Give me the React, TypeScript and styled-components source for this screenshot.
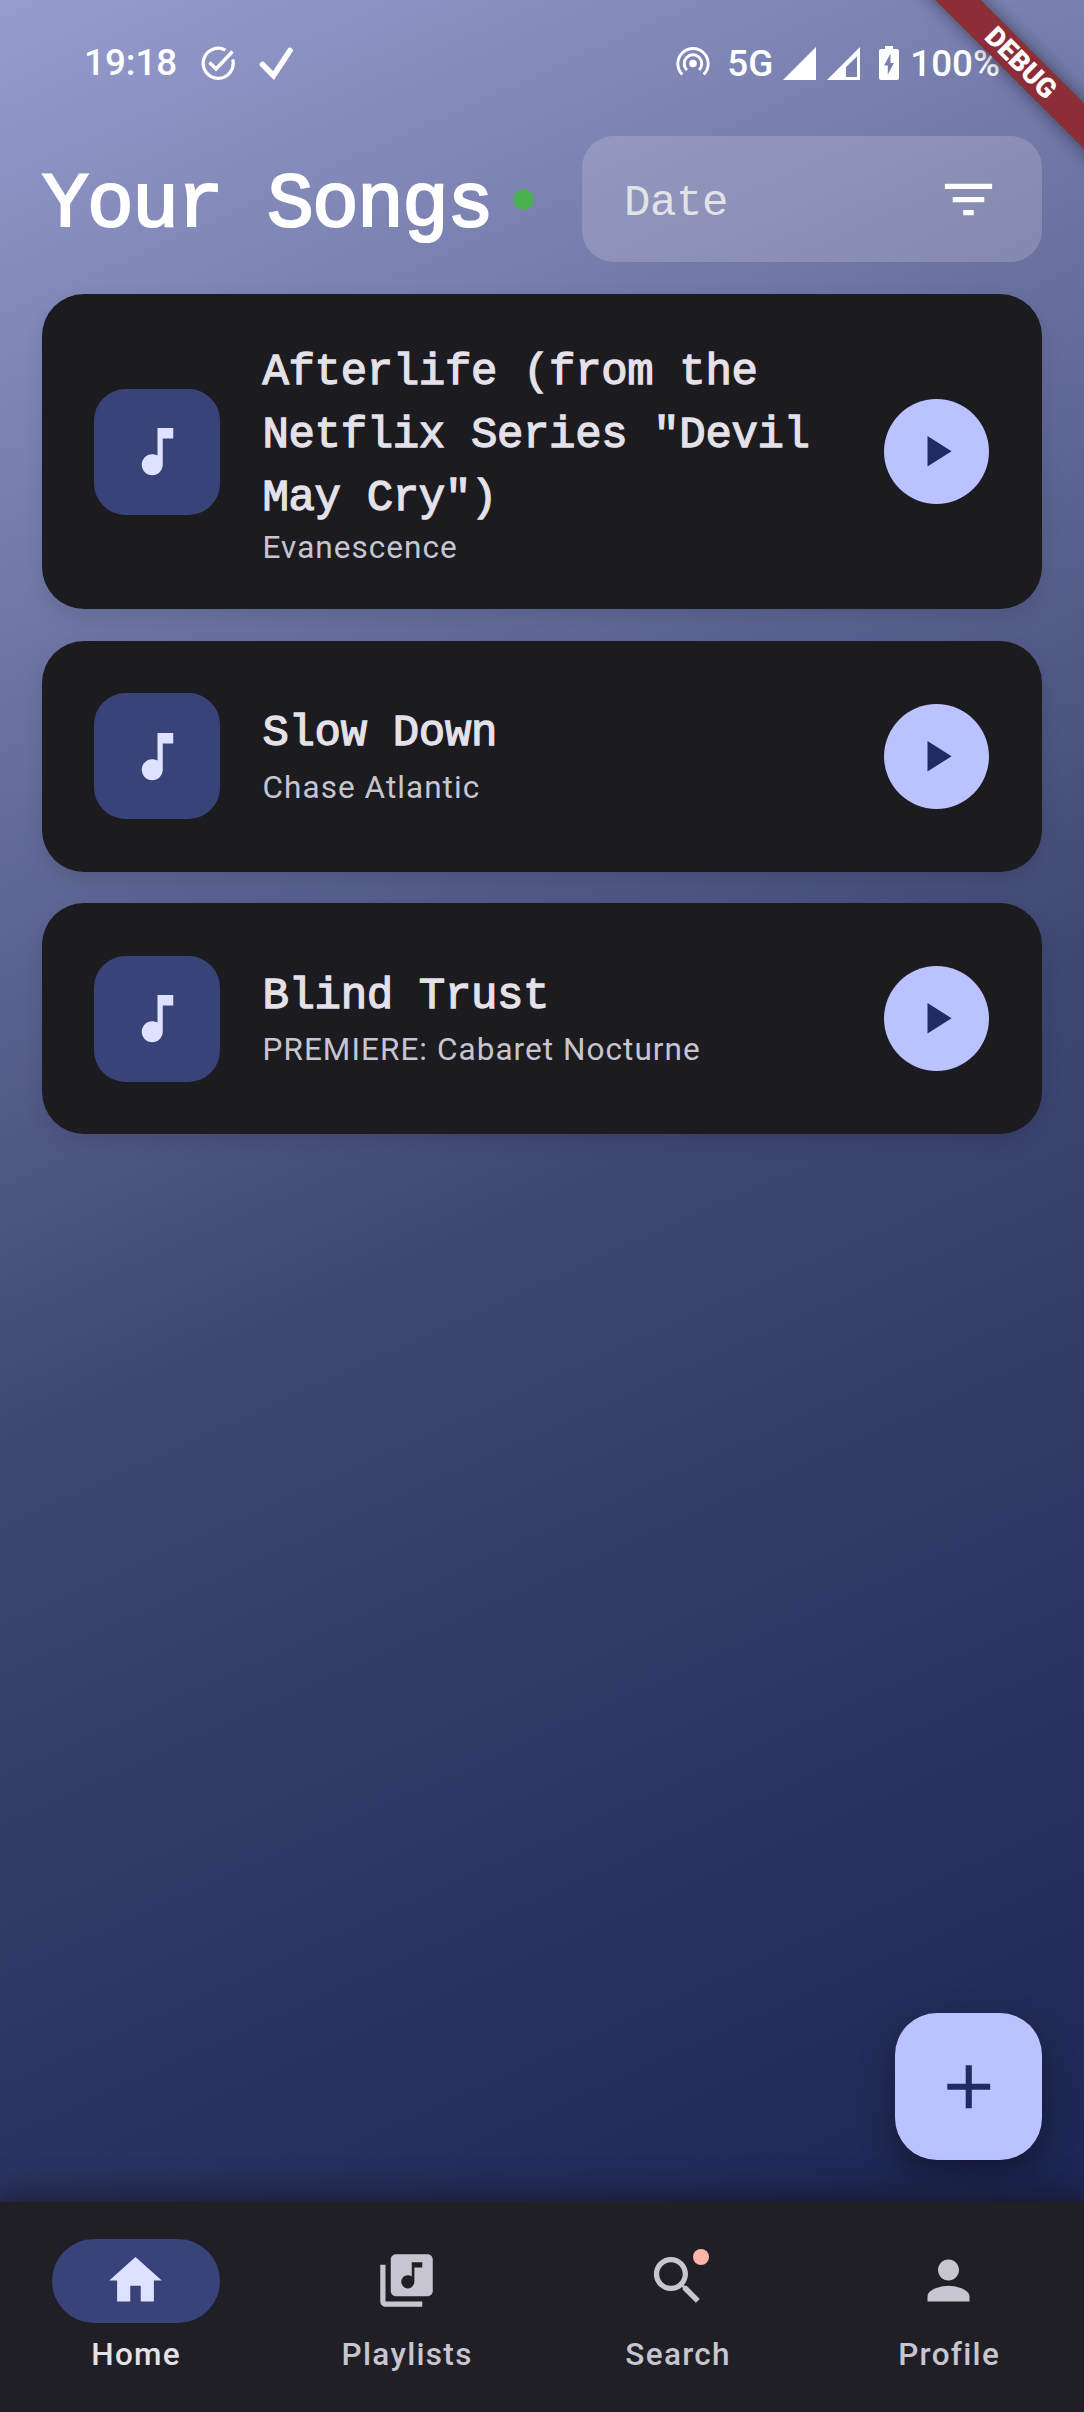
import React from "react";
import styled, { createGlobalStyle, css } from "styled-components";

const MONO = `"Liberation Mono", "DejaVu Sans Mono", monospace`;
const SANS = `Roboto, "Noto Sans", sans-serif`;

const Global = createGlobalStyle`
  *, *::before, *::after { box-sizing: border-box; }
  body { margin: 0; background: #1a224f; }
`;

const Screen = styled.div`
  position: relative;
  display: flex;
  flex-direction: column;
  width: 1084px;
  height: 2412px;
  overflow: hidden;
  font-family: ${SANS};
  background: linear-gradient(155.8deg, #969dce 0%, #3e4673 50%, #16204e 100%);
`;

const StatusBar = styled.div`
  display: flex;
  justify-content: space-between;
  height: 136px;
  padding: 42px 84px 0 84px;
  color: #fff;
`;

const StatusGroup = styled.div`
  display: flex;
  align-items: center;
  height: 42px;
`;

const StatusText = styled.span<{ $left?: number; $drop?: number }>`
  font-size: 36.75px;
  font-weight: 500;
  line-height: 42px;
  white-space: nowrap;
  margin-left: ${(p) => p.$left ?? 0}px;
  padding-top: ${(p) => p.$drop ?? 0}px;
`;

const StatusIcon = styled.svg<{ $left: number }>`
  display: block;
  flex: none;
  margin-left: ${(p) => p.$left}px;
`;

const DebugBanner = styled.div`
  position: absolute;
  top: 47.4px;
  right: -97px;
  width: 320px;
  height: 31.5px;
  transform: rotate(45deg);
  background: #8c2d37;
  box-shadow: 0 0 18px rgba(0, 0, 0, 0.5);
  color: #fff;
  font-size: 27.5px;
  font-weight: 900;
  line-height: 32px;
  text-align: center;
`;

const Header = styled.header`
  display: flex;
  align-items: center;
  height: 126px;
  padding: 0 42px;
`;

const Heading = styled.h1`
  margin: 0;
  padding-top: 12px;
  width: 450px;
  color: #fff;
  font-family: ${MONO};
  font-size: 78px;
  font-weight: 400;
  line-height: 100px;
  letter-spacing: -1.8px;
  white-space: nowrap;
  -webkit-text-stroke: 2.2px #fff;
`;

const OnlineDot = styled.span`
  width: 21px;
  height: 21px;
  margin-left: 21px;
  border-radius: 50%;
  background: #4caf50;
`;

const SortField = styled.button`
  display: flex;
  align-items: center;
  justify-content: space-between;
  width: 460px;
  height: 126px;
  margin-left: auto;
  padding: 0 42px;
  border: 0;
  border-radius: 31.5px;
  background: rgba(228, 225, 233, 0.22);
  color: #e4e1e9;
`;

const SortValue = styled.span`
  padding-top: 8px;
  font-family: ${MONO};
  font-size: 44px;
  letter-spacing: -0.4px;
  line-height: 63px;
`;

const SongList = styled.ul`
  display: flex;
  flex-direction: column;
  gap: 31.5px;
  margin: 32px 42px 0;
  padding: 0;
  list-style: none;
`;

const SongCard = styled.li<{ $tall?: boolean }>`
  display: flex;
  align-items: center;
  height: ${(p) => (p.$tall ? 315 : 231)}px;
  padding: 0 53px 0 52px;
  border-radius: 42px;
  background: #1c1b20;
  box-shadow: 0 8px 20px rgba(0, 0, 0, 0.1);
`;

const Cover = styled.div`
  display: flex;
  align-items: center;
  justify-content: center;
  flex: none;
  width: 126px;
  height: 126px;
  border-radius: 31.5px;
  background: #384379;
  color: #dee1ff;
`;

const SongInfo = styled.div<{ $tall?: boolean }>`
  display: flex;
  flex-direction: column;
  flex: 1;
  margin-left: 42.5px;
  padding: ${(p) => (p.$tall ? "6px 0 0" : "0 0 1.5px")};
`;

const SongTitle = styled.span<{ $tall?: boolean }>`
  width: 590px;
  margin-bottom: ${(p) => (p.$tall ? -3 : 1.5)}px;
  color: #e4e1e9;
  font-family: ${MONO};
  font-size: 44px;
  line-height: 63px;
  letter-spacing: -0.35px;
  -webkit-text-stroke: 1.3px #e4e1e9;
`;

const Artist = styled.span`
  color: #c7c5d0;
  font-size: 31.5px;
  line-height: 42px;
  letter-spacing: 1.05px;
`;

const PlayButton = styled.button`
  display: flex;
  align-items: center;
  justify-content: center;
  flex: none;
  width: 105px;
  height: 105px;
  padding: 0;
  border: 0;
  border-radius: 50%;
  background: #bac3ff;
  color: #202c61;
`;

const FabRow = styled.div`
  display: flex;
  justify-content: flex-end;
  margin-top: auto;
  padding: 0 42px 42px;
`;

const Fab = styled.button`
  display: flex;
  align-items: center;
  justify-content: center;
  width: 147px;
  height: 147px;
  padding: 0 0 0 1px;
  border: 0;
  border-radius: 42px;
  background: #bac3ff;
  color: #202c61;
  box-shadow: 0 14px 34px rgba(0, 0, 0, 0.38);
`;

const NavBar = styled.nav`
  display: flex;
  flex: none;
  height: 210px;
  padding-top: 36.75px;
  background: #201f25;
  box-shadow: 0 -4px 28px rgba(20, 20, 26, 0.75);
`;

const NavItem = styled.a<{ $active?: boolean }>`
  display: flex;
  flex: 1;
  flex-direction: column;
  align-items: center;
  color: #c7c5d0;
  ${(p) =>
    p.$active &&
    css`
      color: #e4e1e9;
    `}
`;

const NavLabel = styled.span`
  padding-left: 1.3px;
  font-size: 31.5px;
  font-weight: 500;
  letter-spacing: 1.31px;
  line-height: 42px;
`;

const NavPill = styled.span<{ $active?: boolean }>`
  position: relative;
  display: flex;
  align-items: center;
  justify-content: center;
  width: 168px;
  height: 84px;
  margin-bottom: 11.5px;
  border-radius: 42px;
  background: ${(p) => (p.$active ? "#384379" : "transparent")};
  color: ${(p) => (p.$active ? "#dee1ff" : "#c7c5d0")};
`;

const Badge = styled.span`
  position: absolute;
  top: 10.5px;
  left: 99.5px;
  width: 16px;
  height: 16px;
  border-radius: 50%;
  background: #ffb4ab;
`;

const PATHS = {
  note: "M12 3v10.55c-.59-.34-1.27-.55-2-.55-2.21 0-4 1.79-4 4s1.79 4 4 4 4-1.79 4-4V7h4V3h-6z",
  play: "M8 5v14l11-7z",
  filter: "M10 18h4v-2h-4v2zM3 6v2h18V6H3zm3 7h12v-2H6v2z",
  add: "M19 13h-6v6h-2v-6H5v-2h6V5h2v6h6v2z",
  home: "M10 20v-6h4v6h5v-8h3L12 3 2 12h3v8z",
  library:
    "M20 2H8c-1.1 0-2 .9-2 2v12c0 1.1.9 2 2 2h12c1.1 0 2-.9 2-2V4c0-1.1-.9-2-2-2zm-2 5h-3v5.5c0 1.38-1.12 2.5-2.5 2.5S10 13.88 10 12.5s1.12-2.5 2.5-2.5c.57 0 1.08.19 1.5.51V5h4v2zM4 6H2v14c0 1.1.9 2 2 2h14v-2H4V6z",
  search:
    "M15.5 14h-.79l-.28-.27C15.41 12.59 16 11.11 16 9.5 16 5.91 13.09 3 9.5 3S3 5.91 3 9.5 5.91 16 9.5 16c1.61 0 3.09-.59 4.23-1.57l.27.28v.79l5 4.99L20.49 19l-4.99-5zm-6 0C7.01 14 5 11.99 5 9.5S7.01 5 9.5 5 14 7.01 14 9.5 11.99 14 9.5 14z",
  person:
    "M12 12c2.21 0 4-1.79 4-4s-1.79-4-4-4-4 1.79-4 4 1.79 4 4 4zm0 2c-2.67 0-8 1.34-8 4v2h16v-2c0-2.66-5.33-4-8-4z",
};

function Icon({ name, size = 63 }: { name: keyof typeof PATHS; size?: number }) {
  return (
    <svg width={size} height={size} viewBox="0 0 24 24" fill="currentColor">
      <path d={PATHS[name]} />
    </svg>
  );
}

const SONGS = [
  { title: 'Afterlife (from the Netflix Series "Devil May Cry")', artist: "Evanescence", tall: true },
  { title: "Slow Down", artist: "Chase Atlantic" },
  { title: "Blind Trust", artist: "PREMIERE: Cabaret Nocturne" },
];

const TABS: { label: string; icon: keyof typeof PATHS; active?: boolean; badge?: boolean }[] = [
  { label: "Home", icon: "home", active: true },
  { label: "Playlists", icon: "library" },
  { label: "Search", icon: "search", badge: true },
  { label: "Profile", icon: "person" },
];

export default function App() {
  return (
    <>
      <Global />
      <Screen>
        <StatusBar>
          <StatusGroup>
            <StatusText>19:18</StatusText>
            <StatusIcon $left={23} width="36" height="36" viewBox="0 0 36 36" fill="none" stroke="#fff">
              <path d="M25.5 5.2A15 15 0 1 0 32.7 14.5" strokeWidth="3.2" />
              <path d="M9.5 17.5l6.5 6.5L32.500 6.500" strokeWidth="3.4" />
            </StatusIcon>
            <StatusIcon $left={22} width="36" height="36" viewBox="0 0 36 36" fill="none" stroke="#fff">
              <path d="M4.500 19.500L15.500 30.500 32 5.500" strokeWidth="5.6" strokeLinecap="round" />
            </StatusIcon>
          </StatusGroup>
          <StatusGroup>
            <StatusIcon $left={0} width="36" height="36" viewBox="0 0 36 36" fill="none" stroke="#fff">
              <path d="M7.300 29.500A15.200 15.200 0 1 1 28.700 29.500" strokeWidth="2.9" />
              <path d="M12 25A8.800 8.800 0 1 1 24 25" strokeWidth="2.9" />
              <circle cx="18" cy="18.500" r="3.8" fill="#fff" stroke="none" />
            </StatusIcon>
            <StatusText $left={16} $drop={2}>5G</StatusText>
            <StatusIcon $left={10} width="33" height="33" viewBox="0 0 33 33" fill="#fff">
              <path d="M33 0v33H0z" />
            </StatusIcon>
            <StatusIcon $left={11} width="33" height="33" viewBox="0 0 33 33" fill="#fff">
              <path fillRule="evenodd" d="M33 0v33H0zM30 9.5L19 20v10h11z" />
            </StatusIcon>
            <StatusIcon $left={19} width="20" height="34" viewBox="0 0 20 34" fill="#fff">
              <path
                fillRule="evenodd"
                d="M6 0h8v3h4a2 2 0 0 1 2 2v27a2 2 0 0 1-2 2H2a2 2 0 0 1-2-2V5a2 2 0 0 1 2-2h4zM11.500 7.500L5 19.500h3.800v9L15 17h-3.500z"
              />
            </StatusIcon>
            <StatusText $left={11} $drop={2}>100%</StatusText>
          </StatusGroup>
        </StatusBar>

        <Header>
          <Heading>Your Songs</Heading>
          <OnlineDot />
          <SortField>
            <SortValue>Date</SortValue>
            <svg width={63} height={63} viewBox="0 0 24 24" fill="#fff">
              <path d={PATHS.filter} />
            </svg>
          </SortField>
        </Header>

        <SongList>
          {SONGS.map((song) => (
            <SongCard key={song.title} $tall={song.tall}>
              <Cover>
                <Icon name="note" />
              </Cover>
              <SongInfo $tall={song.tall}>
                <SongTitle $tall={song.tall}>{song.title}</SongTitle>
                <Artist>{song.artist}</Artist>
              </SongInfo>
              <PlayButton aria-label="Play">
                <Icon name="play" size={52.5} />
              </PlayButton>
            </SongCard>
          ))}
        </SongList>

        <FabRow>
          <Fab aria-label="Add song">
            <Icon name="add" size={73.5} />
          </Fab>
        </FabRow>

        <NavBar>
          {TABS.map((tab) => (
            <NavItem key={tab.label} $active={tab.active}>
              <NavPill $active={tab.active}>
                <Icon name={tab.icon} />
                {tab.badge && <Badge />}
              </NavPill>
              <NavLabel>{tab.label}</NavLabel>
            </NavItem>
          ))}
        </NavBar>
        <DebugBanner>DEBUG</DebugBanner>
      </Screen>
    </>
  );
}
